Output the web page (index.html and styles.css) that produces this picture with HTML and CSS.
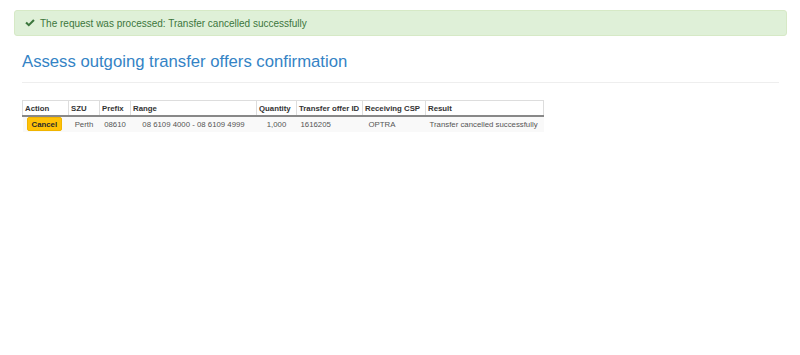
FILE: index.html
```html
<!DOCTYPE html>
<html lang="en">
<head>
    <meta charset="UTF-8">
    <title>Assess outgoing transfer offers confirmation</title>
    <link rel="stylesheet" href="styles.css">
</head>
<body>
    <div class="page">
        <div class="alert alert-success">
            <svg class="icon-ok" viewBox="0 0 10 8" width="10" height="8">
                <path d="M0.3 4.3 L1.8 2.8 L3.8 4.7 L8.2 0.3 L9.7 1.8 L3.8 7.6 Z" fill="currentColor"/>
            </svg>
            <span>The request was processed: Transfer cancelled successfully</span>
        </div>

        <div class="content">
            <h3 class="page-title">Assess outgoing transfer offers confirmation</h3>
            <hr>

            <table class="offers">
                <colgroup>
                    <col class="c-action">
                    <col class="c-szu">
                    <col class="c-prefix">
                    <col class="c-range">
                    <col class="c-qty">
                    <col class="c-offer">
                    <col class="c-csp">
                    <col class="c-result">
                </colgroup>
                <thead>
                    <tr>
                        <th>Action</th>
                        <th>SZU</th>
                        <th>Prefix</th>
                        <th>Range</th>
                        <th>Quantity</th>
                        <th>Transfer offer ID</th>
                        <th>Receiving CSP</th>
                        <th>Result</th>
                    </tr>
                </thead>
                <tbody>
                    <tr>
                        <td><button class="btn-cancel">Cancel</button></td>
                        <td class="center">Perth</td>
                        <td class="center">08610</td>
                        <td class="center">08 6109 4000 - 08 6109 4999</td>
                        <td class="center">1,000</td>
                        <td>1616205</td>
                        <td class="pad">OPTRA</td>
                        <td>Transfer cancelled successfully</td>
                    </tr>
                </tbody>
            </table>
        </div>
    </div>
</body>
</html>
```

FILE: styles.css
```css
* {
    margin: 0;
    padding: 0;
    box-sizing: border-box;
}

body {
    background: #fff;
    font-family: "Liberation Sans", Arial, sans-serif;
    color: #555;
}

.page {
    padding: 10px 13px 0 14px;
}

.alert {
    display: flex;
    align-items: center;
    height: 26px;
    padding: 0 10px;
    border-radius: 3px;
    font-size: 10px;
}

.alert-success {
    background: #dff0d8;
    border: 1px solid #d6e9c6;
    color: #3c763d;
}

.icon-ok {
    margin-right: 5px;
    flex-shrink: 0;
}

.content {
    padding: 0 8px;
}

.page-title {
    margin-top: 17px;
    font-size: 16.7px;
    font-weight: normal;
    line-height: 1.1;
    color: #3483c5;
}

hr {
    border: none;
    border-top: 1px solid #eee;
    margin: 11px 0 17px;
}

.offers {
    border-collapse: collapse;
    table-layout: fixed;
    width: 521px;
    font-size: 7.8px;
}

.c-action { width: 46px; }
.c-szu { width: 31px; }
.c-prefix { width: 31px; }
.c-range { width: 126px; }
.c-qty { width: 40px; }
.c-offer { width: 66px; }
.c-csp { width: 63px; }
.c-result { width: 118px; }

.offers th {
    height: 15px;
    padding: 0 2px;
    text-align: left;
    font-weight: bold;
    color: #333;
    border: 1px solid #ddd;
    border-bottom: 2px solid #888;
    white-space: nowrap;
}

.offers td {
    height: 16px;
    padding: 0 4px;
    background: #f9f9f9;
    white-space: nowrap;
}

.offers td.center {
    text-align: center;
}

.offers td.pad {
    padding-left: 6px;
}

.btn-cancel {
    display: block;
    height: 14px;
    padding: 0 4px;
    background: #ffc107;
    border: 1px solid #f0b400;
    border-radius: 2px;
    font-family: inherit;
    font-size: 7.8px;
    font-weight: bold;
    color: #2a2a2a;
}
```
